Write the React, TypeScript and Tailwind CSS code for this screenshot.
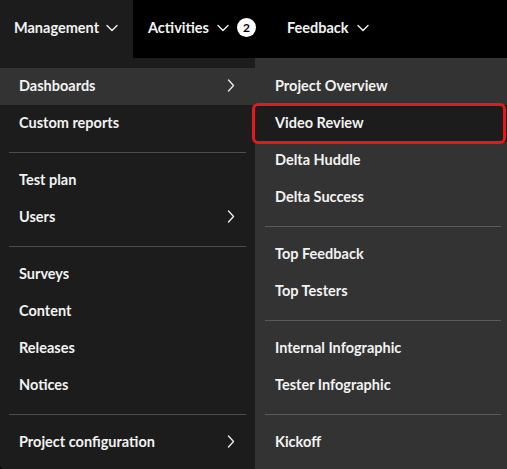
import React from "react";

const ChevronDown = () => (
  <svg width="12" height="8" viewBox="0 0 12 8" fill="none" className="shrink-0">
    <path d="M1 1.5 L6 6.5 L11 1.5" stroke="#f2f2f2" strokeWidth="1.4" strokeLinecap="round" strokeLinejoin="round" />
  </svg>
);

const ChevronRight = () => (
  <svg width="8" height="13" viewBox="0 0 8 13" fill="none" className="shrink-0">
    <path d="M1.5 1 L6.5 6.5 L1.5 12" stroke="#e8e8e8" strokeWidth="1.4" strokeLinecap="round" strokeLinejoin="round" />
  </svg>
);

type Item = { label: string; sub?: boolean; active?: boolean } | "div";

const left: Item[] = [
  { label: "Dashboards", sub: true, active: true },
  { label: "Custom reports" },
  "div",
  { label: "Test plan" },
  { label: "Users", sub: true },
  "div",
  { label: "Surveys" },
  { label: "Content" },
  { label: "Releases" },
  { label: "Notices" },
  "div",
  { label: "Project configuration", sub: true },
];

const right: Item[] = [
  { label: "Project Overview" },
  { label: "Video Review", active: true },
  { label: "Delta Huddle" },
  { label: "Delta Success" },
  "div",
  { label: "Top Feedback" },
  { label: "Top Testers" },
  "div",
  { label: "Internal Infographic" },
  { label: "Tester Infographic" },
  "div",
  { label: "Kickoff" },
];

export default function App() {
  return (
    <div
      className="w-[507px] h-[469px] bg-black overflow-hidden flex flex-col text-[14.5px] font-bold text-[#f2f2f2]"
      style={{ fontFamily: "Lato, 'Noto Sans', sans-serif" }}
    >
      <nav className="flex h-[58px] shrink-0 items-stretch">
        <div className="w-[133px] bg-[#1c1c1c] flex items-center pl-[14px] gap-[7px] pb-[3px]">
          <span>Management</span>
          <ChevronDown />
        </div>
        <div className="flex items-center pl-[15px] gap-[8px] pb-[3px]">
          <span>Activities</span>
          <ChevronDown />
          <span className="w-[19px] h-[19px] rounded-full bg-white text-black text-[12px] font-bold flex items-center justify-center">
            2
          </span>
        </div>
        <div className="flex items-center pl-[31px] gap-[8px] pb-[3px]">
          <span>Feedback</span>
          <ChevronDown />
        </div>
      </nav>
      <div className="flex flex-1 min-h-0">
        <div className="w-[255px] shrink-0 bg-[#1c1c1c] pt-[10px] flex flex-col rounded-bl-[4px]">
          {left.map((it, i) =>
            it === "div" ? (
              <div key={i} className="mt-[10px] mb-[9px] mx-[9px] h-px bg-[#4d4d4d]" />
            ) : (
              <div
                key={i}
                className={`h-[37px] flex items-center justify-between pl-[19px] pr-[20px] pb-[2px] ${it.active ? "bg-[#333333]" : ""}`}
              >
                <span>{it.label}</span>
                {it.sub && <ChevronRight />}
              </div>
            )
          )}
        </div>
        <div className="w-[256px] shrink-0 bg-[#333333] pt-[10px] flex flex-col">
          {right.map((it, i) =>
            it === "div" ? (
              <div key={i} className="mt-[10px] mb-[9px] mx-[10px] h-px bg-[#5a5a5a]" />
            ) : (
              <div
                key={i}
                className={`relative h-[37px] flex items-center pl-[20px] pb-[2px] ${it.active ? "bg-[#1c1c1c]" : ""}`}
              >
                <span>{it.label}</span>
                {it.active && (
                  <div className="absolute -top-[2px] -bottom-[2px] -left-[3px] right-[5px] border-[3px] border-[#e5191a] rounded-[6px]" />
                )}
              </div>
            )
          )}
        </div>
      </div>
    </div>
  );
}
